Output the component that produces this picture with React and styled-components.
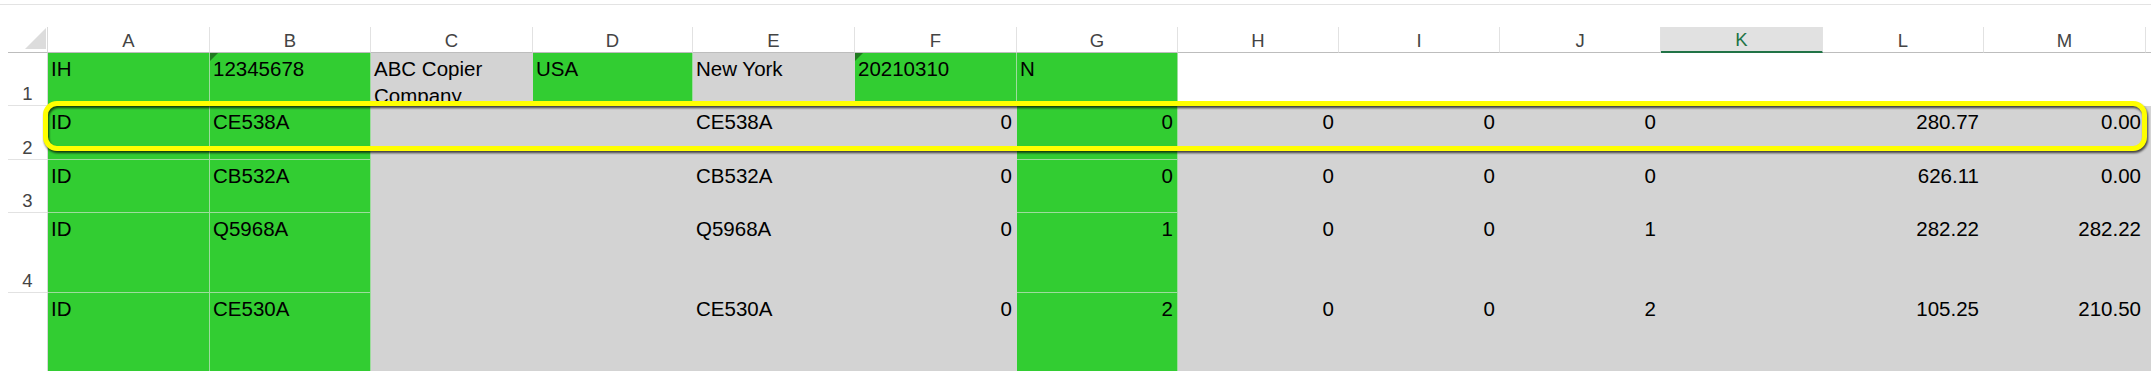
import React from 'react';
import styled, { createGlobalStyle, css } from 'styled-components';

const GREEN = '#32cd32';
const GRAY = '#d3d3d3';

const GlobalStyle = createGlobalStyle`
    html, body {
        margin: 0;
        padding: 0;
        background: #fff;
        overflow: hidden;
    }
    body {
        font-family: "Liberation Sans", Arial, sans-serif;
    }
`;

const fills = {
    g: css`
        background: ${GREEN};
        border-color: #9ddc9d;
    `,
    s: css`
        background: ${GRAY};
        border-color: ${GRAY};
    `,
    w: css`
        background: #fff;
        border-color: #fff;
    `,
};

const Page = styled.div`
    width: 2151px;
    height: 371px;
    overflow: hidden;
`;

// thin edge of the formula bar above the grid
const BarEdge = styled.div`
    height: 4px;
    border-bottom: 1px solid #e3e3e3;
    margin-bottom: 22px;
`;

const Sheet = styled.div`
    position: relative;
    display: grid;
    grid-template-columns: 40px ${(p) => p.$cols};
    grid-template-rows: 26px ${(p) => p.$rows};
    padding-left: 8px;
    width: max-content;
`;

const Corner = styled.div`
    display: flex;
    align-items: flex-end;
    justify-content: flex-end;
    padding: 0 1px 3px 0;
    border-right: 1px solid #dadada;
    border-bottom: 1px solid #bdbdbd;
    box-sizing: border-box;
    &::after {
        content: '';
        width: 21px;
        height: 21px;
        background: #dcdcdc;
        clip-path: polygon(100% 0, 100% 100%, 0 100%);
    }
`;

const ColHead = styled.div`
    box-sizing: border-box;
    display: flex;
    align-items: flex-end;
    justify-content: center;
    font-size: 18.5px;
    color: #444;
    border-right: 1px solid #e2e2e2;
    border-bottom: 1px solid #bdbdbd;
    ${(p) =>
        p.$active &&
        css`
            background: #e1e1e1;
            color: #217346;
            border-bottom: 2px solid #217346;
        `}
`;

const RowHead = styled.div`
    box-sizing: border-box;
    display: flex;
    align-items: flex-end;
    justify-content: center;
    font-size: 18.5px;
    color: #444;
    border-right: 1px solid #d8d8d8;
    border-bottom: 1px solid #e2e2e2;
`;

const Cell = styled.div`
    position: relative;
    box-sizing: border-box;
    overflow: hidden;
    padding: 2px 4px 0 3px;
    font-size: 20.5px;
    line-height: 27px;
    color: #000;
    text-align: ${(p) => (p.$right ? 'right' : 'left')};
    border-right: 1px solid;
    border-bottom: 1px solid;
    ${(p) => fills[p.$fill]}
    ${(p) =>
        p.$flag &&
        css`
            &::before {
                content: '';
                position: absolute;
                left: 0;
                top: 0;
                width: 8px;
                height: 8px;
                background: #1f7a1f;
                clip-path: polygon(0 0, 100% 0, 0 100%);
            }
        `}
`;

const Highlight = styled.div`
    position: absolute;
    left: 43px;
    top: 74px;
    width: 2104px;
    height: 50px;
    box-sizing: border-box;
    border: 5px solid #ffff00;
    border-radius: 14px;
    filter: drop-shadow(1px 2.5px 1.2px rgba(0, 0, 0, 0.7));
    pointer-events: none;
`;

// last column is only partly on screen, so it carries no label
const columns = [
    { id: 'A', w: 162 },
    { id: 'B', w: 161 },
    { id: 'C', w: 162 },
    { id: 'D', w: 160 },
    { id: 'E', w: 162 },
    { id: 'F', w: 162 },
    { id: 'G', w: 161 },
    { id: 'H', w: 161 },
    { id: 'I', w: 161 },
    { id: 'J', w: 161 },
    { id: 'K', w: 162 },
    { id: 'L', w: 161 },
    { id: 'M', w: 162 },
    { id: 'N', w: 162, hidden: true },
];

const itemRow = (code, f, g, h, i, j, l, m) => [
    ['ID', 'g'],
    [code, 'g'],
    ['', 's'],
    ['', 's'],
    [code, 's'],
    [f, 's', true],
    [g, 'g', true],
    [h, 's', true],
    [i, 's', true],
    [j, 's', true],
    ['', 's'],
    [l, 's', true],
    [m, 's', true],
    ['', 's'],
];

const rows = [
    {
        n: 1,
        h: 53,
        cells: [
            ['IH', 'g'],
            ['12345678', 'g', false, true],
            ['ABC Copier Company', 's'],
            ['USA', 'g'],
            ['New York', 's'],
            ['20210310', 'g', false, true],
            ['N', 'g'],
            ['', 'w'],
            ['', 'w'],
            ['', 'w'],
            ['', 'w'],
            ['', 'w'],
            ['', 'w'],
            ['', 'w'],
        ],
    },
    { n: 2, h: 54, cells: itemRow('CE538A', '0', '0', '0', '0', '0', '280.77', '0.00') },
    { n: 3, h: 53, cells: itemRow('CB532A', '0', '0', '0', '0', '0', '626.11', '0.00') },
    { n: 4, h: 80, cells: itemRow('Q5968A', '0', '1', '0', '0', '1', '282.22', '282.22') },
    { n: 5, h: 100, cells: itemRow('CE530A', '0', '2', '0', '0', '2', '105.25', '210.50') },
];

const App = () => {
    const colTemplate = columns.map((c) => `${c.w}px`).join(' ');
    const rowTemplate = rows.map((r) => `${r.h}px`).join(' ');

    return (
        <Page>
            <GlobalStyle />
            <BarEdge />
            <Sheet $cols={colTemplate} $rows={rowTemplate}>
                <Corner />
                {columns.map((c) => (
                    <ColHead key={c.id} $active={c.id === 'K'}>
                        {c.hidden ? '' : c.id}
                    </ColHead>
                ))}
                {rows.map((r) => (
                    <React.Fragment key={r.n}>
                        <RowHead>{r.n}</RowHead>
                        {r.cells.map(([text, fill, right, flag], i) => (
                            <Cell key={i} $fill={fill} $right={right} $flag={flag}>
                                {text}
                            </Cell>
                        ))}
                    </React.Fragment>
                ))}
                <Highlight />
            </Sheet>
        </Page>
    );
};

export default App;
